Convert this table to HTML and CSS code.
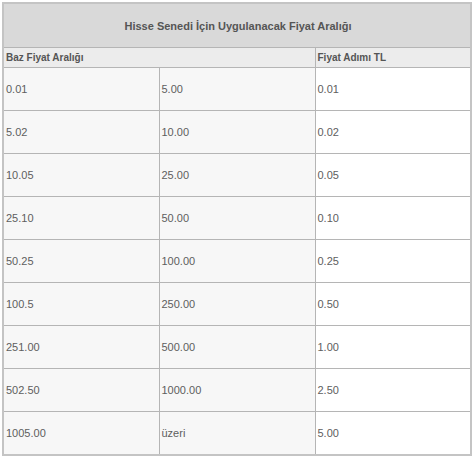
FILE: index.html
```html
<!DOCTYPE html>
<html lang="tr">
<head>
<meta charset="utf-8">
<link rel="stylesheet" href="styles.css">
</head>
<body>
<table class="price-table">
  <tr class="title-row"><th colspan="3">Hisse Senedi İçin Uygulanacak Fiyat Aralığı</th></tr>
  <tr class="head-row"><th colspan="2">Baz Fiyat Aralığı</th><th>Fiyat Adımı TL</th></tr>
  <tr><td>0.01</td><td>5.00</td><td class="step">0.01</td></tr>
  <tr><td>5.02</td><td>10.00</td><td class="step">0.02</td></tr>
  <tr><td>10.05</td><td>25.00</td><td class="step">0.05</td></tr>
  <tr><td>25.10</td><td>50.00</td><td class="step">0.10</td></tr>
  <tr><td>50.25</td><td>100.00</td><td class="step">0.25</td></tr>
  <tr><td>100.5</td><td>250.00</td><td class="step">0.50</td></tr>
  <tr><td>251.00</td><td>500.00</td><td class="step">1.00</td></tr>
  <tr><td>502.50</td><td>1000.00</td><td class="step">2.50</td></tr>
  <tr><td>1005.00</td><td>üzeri</td><td class="step">5.00</td></tr>
</table>
</body>
</html>
```
FILE: styles.css
```css
html, body {
  margin: 0;
  padding: 0;
  background: #ffffff;
}
body {
  padding: 2px 3px 0 2px;
  font-family: "Liberation Sans", Arial, sans-serif;
  font-size: 11px;
  color: #5e5e5e;
}
.price-table {
  width: 470px;
  border-collapse: collapse;
  border: 2px solid #c4c4c4;
  table-layout: fixed;
}
.price-table th,
.price-table td {
  border: 1px solid #b5b5b5;
  text-align: left;
  padding: 0 0 0 2px;
  vertical-align: middle;
}
.title-row th {
  height: 43px;
  background: #d9d9d9;
  text-align: center;
  font-weight: bold;
  color: #555;
}
.head-row th {
  height: 19px;
  background: #ececec;
  font-size: 10px;
  font-weight: bold;
  color: #555;
}
.price-table td {
  height: 42px;
  background: #f7f7f7;
}
.price-table td.step {
  background: #ffffff;
}
.price-table tr td:first-child { width: 155px; }
```
